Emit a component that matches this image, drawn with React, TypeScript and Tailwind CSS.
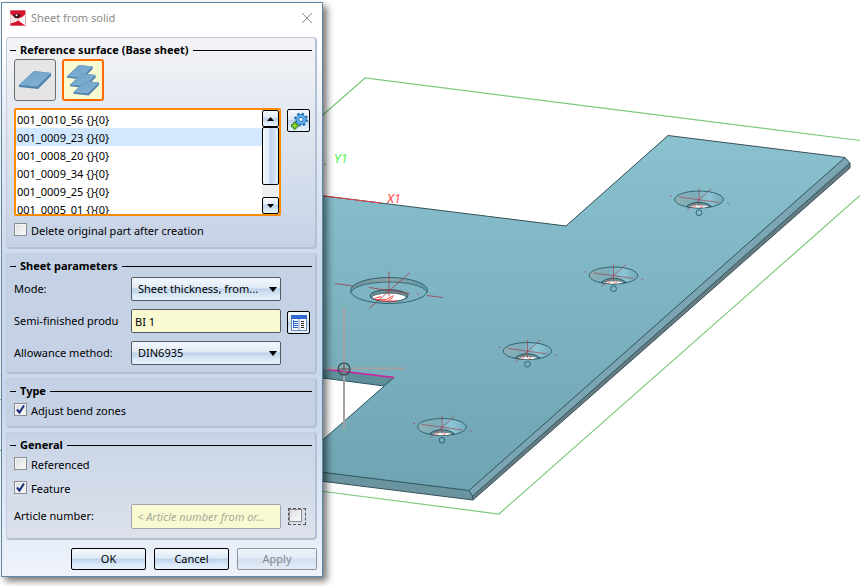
import React from "react";

const parts = [
  "001_0010_56 {}{0}",
  "001_0009_23 {}{0}",
  "001_0008_20 {}{0}",
  "001_0009_34 {}{0}",
  "001_0009_25 {}{0}",
  "001_0005_01 {}{0}",
];

const glossy =
  "bg-[linear-gradient(180deg,#f4f8fc_0%,#dfeaf6_45%,#bdd2ea_50%,#dbeaf8_80%,#e6f2fc_100%)]";

function CountersunkHole({ x, y }: { x: number; y: number }) {
  return (
    <g transform={`translate(${x} ${y})`} fill="none">
      <ellipse rx="24.3" ry="8.5" fill="url(#sink)" stroke="#2f6470" strokeWidth="1" />
      <path d="M-12.500 7Q-8 2.800 0 2.800Q8 2.800 12.500 7Q0 10-12.500 7Z" fill="#6c9097" stroke="#2b5059" strokeWidth="0.9" />
      <path d="M-10 7Q0 4.600 10 7Q0 9.400-10 7Z" fill="#fff" />
      <path d="M0-11V7M-20-2.6L20 3M12.5-11L-12 11M-29-3.6h2M28 3.6l2 .6" stroke="#a23a47" strokeOpacity="0.8" strokeWidth="0.8" />
      <path d="M-6 8L-3 6M1 8L4 6" stroke="#ff3c3c" strokeWidth="0.8" />
      <circle cy="13.2" r="2.9" stroke="#2f6470" strokeWidth="1" />
    </g>
  );
}

function Viewport() {
  return (
    <svg
      className="block h-screen w-full"
      viewBox="0 0 860 586"
      preserveAspectRatio="xMinYMin slice"
      role="img"
      aria-label="3D view of the sheet part"
    >
      <defs>
        <linearGradient id="face" x1="0" y1="0" x2="0" y2="1">
          <stop offset="0" stopColor="#8ac1cf" />
          <stop offset="1" stopColor="#6fa4b3" />
        </linearGradient>
        <linearGradient id="sink" x1="0" y1="0" x2="1" y2="0">
          <stop offset="0" stopColor="#8fb0b6" />
          <stop offset="0.4" stopColor="#79adba" />
          <stop offset="0.7" stopColor="#8cc6d6" />
          <stop offset="1" stopColor="#74aaba" />
        </linearGradient>
        <linearGradient id="rim" x1="0" y1="0" x2="1" y2="0">
          <stop offset="0" stopColor="#6b8d94" />
          <stop offset="0.5" stopColor="#8ba4aa" />
          <stop offset="1" stopColor="#5d9aa8" />
        </linearGradient>
      </defs>

      <g fill="none" stroke="#7cc97c" strokeWidth="1.2">
        <path d="M300 135L365 78L860 140.5" />
        <path d="M300 488.5L499 514L860 195.5" />
        <path d="M0 399.500h2M0 450.500h2M324 165l2-1" />
      </g>

      <path d="M300 193L566 226L668 135.500L845 157.500L850 163V168L473 500L300 478.500Z" fill="#667c82" />
      <path d="M300 469.500L469 490.500L472.500 496L473 500L300 478.500Z" fill="#6a949f" />
      <path d="M469 490.500L845 157.500L850 163L472.500 496Z" fill="#7ba5b3" />
      <path d="M300 193L566 226L668 135.500L845 157.500L469 490.500L300 469.500Z" fill="url(#face)" />
      <g fill="none" stroke="#2d5761" strokeWidth="1">
        <path d="M300 193L566 226L668 135.500L845 157.500L850 163V168L473 500L300 478.500" stroke="#3b555c" />
        <path d="M300 469.500L469 490.500L845 157.500" />
        <path d="M469 490.500L472.500 496L850 163M472.500 496L473 500" />
      </g>

      <path d="M300 366L394 377.500L384 386L300 375Z" fill="#5f8f9b" />
      <path d="M300 375L384 386L300 460Z" fill="#fff" />
      <path d="M300 375L384 386M394 377.500L300 460" stroke="#2d5761" fill="none" />
      <path d="M328 369.500L394 377.500" stroke="#d31c9c" strokeWidth="1.5" />

      <path d="M324 196L381 203" stroke="#e8404a" strokeWidth="1" />
      <text x="387" y="203" fill="#ff4a4a" className="font-['Roboto'] text-[12px] italic">X1</text>
      <text x="334" y="163" fill="#4cf04c" className="font-['Roboto'] text-[12px] italic">Y1</text>

      <g transform="translate(389 290.500)" fill="none">
        <path d="M-38.500 2C-40-18 40-18 38.500 2C33-12-33-12-38.500 2Z" fill="url(#rim)" />
        <ellipse rx="38.500" ry="13" stroke="#2f6470" />
        <path d="M-38.300 2C-32-12 32-12 38.300 2" stroke="#2f6470" strokeWidth="0.9" />
        <ellipse cy="5.200" rx="19" ry="6" fill="#6c9097" stroke="#2b5059" />
        <ellipse cy="6.800" rx="17" ry="4.200" fill="#fff" stroke="#2b5059" strokeWidth="0.8" />
        <path d="M-54-7L-36-4.500M38 5L54 7M0-19V6M21-18L-20 18M-20-3L21 3M28 3.500h2" stroke="#a23a47" strokeOpacity="0.85" strokeWidth="0.9" />
        <path d="M-15 8L-8 6M-13 9H-3L5 5M-1 10L4 7M-8 10.500H8" stroke="#ff3c3c" strokeWidth="0.9" />
      </g>

      <CountersunkHole x={699} y={199.500} />
      <CountersunkHole x={613.500} y={275.500} />
      <CountersunkHole x={527.500} y={351} />
      <CountersunkHole x={442} y={427} />

      <g fill="none">
        <path d="M344 308V429M324 368.500H405" stroke="#a2a2a2" strokeWidth="2" />
        <circle cx="344" cy="369" r="6" stroke="#37454a" strokeWidth="1.200" />
        <path d="M344 363V375M338 369H350" stroke="#4b5558" strokeWidth="1" />
      </g>
    </svg>
  );
}

function AppLogo() {
  return (
    <svg className="size-4" viewBox="0 0 16 16" aria-hidden="true">
      <rect x="0.500" y="0.500" width="15" height="15" fill="#fff" stroke="#dca8ae" />
      <path d="M0.500 0.500H15V5Q12 9 8 10.500Q4 9 0.500 4Z" fill="#d8102f" />
      <path d="M0.500 4Q4 7 8 8.500Q12 8 15 4.500V6Q11 10 6 11.500L0.500 14Z" fill="#f7e3e3" />
      <path d="M0.500 13.500Q5 12.500 8.500 10.500L15 15.500H0.500Z" fill="#d8102f" />
      <path d="M3 5.500Q6.500 2 11 5.500Q8 9 5 8Z" fill="#301818" />
      <circle cx="6.500" cy="5.200" r="1" fill="#fff" />
    </svg>
  );
}

function Slab({ x, y, s = 1 }: { x: number; y: number; s?: number }) {
  return (
    <g transform={`translate(${x} ${y}) scale(${s})`}>
      <path d="M0 14L15 0L32 2V5L19 18L0 16Z" fill="#4f83ad" />
      <path d="M0 14L15 0L32 2L18 15.500Z" fill="url(#slab)" />
    </g>
  );
}

function SlabDefs() {
  return (
    <defs>
      <linearGradient id="slab" x1="0" y1="0" x2="1" y2="1">
        <stop offset="0" stopColor="#6c9fc7" />
        <stop offset="1" stopColor="#86b4d6" />
      </linearGradient>
    </defs>
  );
}

function Group({ title, className, children }: { title: string; className: string; children: React.ReactNode }) {
  return (
    <section
      className={`rounded border-t border-r-2 border-b-2 border-l border-[#b4c1d5] border-t-[#c3cddc] border-l-[#c3cddc] pt-[3px] ${className}`}
    >
      <div className="flex h-[18px] items-center gap-1 px-[3px]">
        <span className="h-px w-[6px] bg-black" />
        <h2 className="leading-[18px] font-bold">{title}</h2>
        <span className="h-px flex-1 bg-black" />
      </div>
      <div className="pr-[5px] pl-[7px]">{children}</div>
    </section>
  );
}

function Check({ label, checked = false }: { label: string; checked?: boolean }) {
  return (
    <label className="flex h-[14px] items-start gap-1 leading-4">
      <span className="grid">
        <input
          type="checkbox"
          defaultChecked={checked}
          className="peer col-start-1 row-start-1 size-[13px] appearance-none border border-[#8a8c90] bg-[linear-gradient(135deg,#dcdde0,#fbfbfb)] shadow-[inset_0_0_0_1px_#f4f4f4]"
        />
        <svg className="pointer-events-none invisible col-start-1 row-start-1 size-[13px] peer-checked:visible" viewBox="0 0 13 13" aria-hidden="true">
          <path d="M3 6.500L5.500 9.500L10 2.500" fill="none" stroke="#16287a" strokeWidth="2" />
        </svg>
      </span>
      {label}
    </label>
  );
}

function Dropdown({ id, value }: { id: string; value: string }) {
  return (
    <span className="grid h-6 w-[150px] items-center">
      <select
        id={id}
        className={`col-start-1 row-start-1 h-6 w-full appearance-none rounded-[2px] border border-[#55585e] pr-4 pl-[6px] ${glossy}`}
      >
        <option>{value}</option>
      </select>
      <svg className="pointer-events-none col-start-1 row-start-1 mr-1 h-[5px] w-2 justify-self-end" viewBox="0 0 8 5" aria-hidden="true">
        <path d="M0 0H8L4 5Z" />
      </svg>
    </span>
  );
}

function ScrollButton({ label, up = false }: { label: string; up?: boolean }) {
  return (
    <button aria-label={label} className={`flex h-[17px] w-full items-center justify-center rounded-[2px] border border-black ${glossy}`}>
      <svg className="h-[4px] w-[7px]" viewBox="0 0 7 4" aria-hidden="true">
        <path d={up ? "M0 4H7L3.500 0Z" : "M0 0H7L3.500 4Z"} />
      </svg>
    </button>
  );
}

function ReferenceSurface() {
  return (
    <Group title="Reference surface (Base sheet)" className="bg-[linear-gradient(180deg,#f3f4f6,#e2e7f0_40%,#c5d2e6)]">
      <div className="flex gap-[6px]">
        <button aria-label="Single surface" className="flex size-[42px] items-center justify-center rounded-[3px] border border-[#6d6d6d] bg-[#e5e5e5]">
          <svg className="h-5 w-8" viewBox="0 0 32 20" aria-hidden="true">
            <SlabDefs />
            <Slab x={0} y={1} />
          </svg>
        </button>
        <button aria-label="Several surfaces" className="flex size-[42px] items-center justify-center rounded-[3px] border-2 border-[#ff6a00] bg-[#fafad2]">
          <svg className="h-8 w-8" viewBox="0 0 32 32" aria-hidden="true">
            <Slab x={0} y={1} s={0.8} />
            <Slab x={3} y={9.500} s={0.8} />
            <Slab x={6.500} y={17} s={0.8} />
          </svg>
        </button>
      </div>
      <div className="mt-[7px] flex items-start gap-[6px]">
        <div className="flex h-[108px] w-[267px] rounded-[2px] border-2 border-[#ff8c00] bg-white">
          <ul role="listbox" aria-label="Base surfaces" className="h-full flex-1 overflow-hidden">
            {parts.map((part, i) => (
              <li key={part} role="option" aria-selected={i === 1} className={`px-px pt-px leading-[17px] ${i === 1 ? "bg-[#d1e8ff]" : ""}`}>
                {part}
              </li>
            ))}
          </ul>
          <div className="flex w-[17px] flex-col bg-[#efefef]">
            <ScrollButton label="Scroll up" up />
            <div className="h-[58px] rounded-[2px] border border-black bg-[linear-gradient(90deg,#f4f8fc_0%,#dfeaf6_40%,#bdd2ea_50%,#e6f2fc_100%)]" />
            <div className="flex-1" />
            <ScrollButton label="Scroll down" />
          </div>
        </div>
        <button aria-label="Add by settings" className={`mt-px flex size-[23px] items-center justify-center rounded-[2px] border border-black ${glossy}`}>
          <svg className="size-[18px]" viewBox="0 0 18 18" aria-hidden="true">
            <circle cx="11" cy="7.500" r="5.800" fill="none" stroke="#1f6fb8" strokeWidth="2.200" strokeDasharray="2.300 2.250" />
            <circle cx="11" cy="7.500" r="4.900" fill="#6db7ea" stroke="#1f78c4" strokeWidth="1" />
            <circle cx="11" cy="7.500" r="2.200" fill="#e6f0f8" stroke="#1f6fb8" strokeWidth="1" />
            <path d="M3.500 10.500h2.500v2h2v2.500h-2v2h-2.500v-2h-2v-2.500h2z" fill="#8fdc2a" stroke="#2d7a16" strokeWidth="0.900" />
          </svg>
        </button>
      </div>
      <div className="mt-[7px] mb-[10px]">
        <Check label="Delete original part after creation" />
      </div>
    </Group>
  );
}

function SheetParameters() {
  return (
    <Group title="Sheet parameters" className="bg-[#c5d2e6]">
      <div className="mt-[2px] mb-[7px] grid grid-cols-[105px_150px_23px] items-center gap-y-2">
        <label htmlFor="mode">Mode:</label>
        <span className="col-span-2 ml-3"><Dropdown id="mode" value="Sheet thickness, from..." /></span>
        <label htmlFor="semi" className="overflow-hidden whitespace-nowrap">Semi-finished product:</label>
        <div className="col-span-2 ml-3 flex h-6 items-center gap-[6px]">
          <input id="semi" defaultValue="BI 1" className="h-6 w-[150px] rounded-[2px] border border-[#55585e] bg-[#fafad2] px-[3px]" />
          <button aria-label="Open catalogue" className={`mt-[3px] flex size-[23px] shrink-0 items-center justify-center rounded-[2px] border border-black ${glossy}`}>
            <svg className="size-4" viewBox="0 0 16 16" aria-hidden="true">
              <rect x="0.500" y="1" width="15" height="14.500" fill="#f5f8ff" stroke="#6f87b5" />
              <rect x="0" y="0" width="16" height="4" fill="#2f6ad0" />
              <path d="M8 4V15" stroke="#8a9ab8" />
              <path d="M2.500 5V13M2.500 6.500H7M2.500 8.500H7M2.500 10.500H7M2.500 12.500H7" stroke="#2f6ad0" fill="none" />
              <path d="M10 6.500H13M10 8.500H13M10 10.500H13M10 12.500H13" stroke="#222" />
            </svg>
          </button>
        </div>
        <label htmlFor="allowance" className="whitespace-nowrap">Allowance method:</label>
        <span className="col-span-2 ml-3"><Dropdown id="allowance" value="DIN6935" /></span>
      </div>
    </Group>
  );
}

function General() {
  return (
    <Group title="General" className="bg-[linear-gradient(180deg,#c8d4e6,#dde2ec)]">
      <div className="mt-[3px] mb-[9px] flex flex-col gap-[10px]">
        <Check label="Referenced" />
        <Check label="Feature" checked />
        <div className="-mt-px flex items-center">
          <label htmlFor="article" className="w-[117px]">Article number:</label>
          <input
            id="article"
            disabled
            placeholder="&lt; Article number from or..."
            className="h-[25px] w-[150px] rounded-[2px] border border-[#a3a5a8] bg-[#fafad2] px-[5px] italic placeholder:text-[#a9a99b]"
          />
          <span className="ml-[7px] flex h-[17px] w-[18px] items-start border border-dashed border-[#555]">
            <input
              type="checkbox"
              aria-label="Set article number"
              className="size-[13px] appearance-none border border-[#8a8c90] bg-[linear-gradient(135deg,#dcdde0,#fbfbfb)]"
            />
          </span>
        </div>
      </div>
    </Group>
  );
}

export default function App() {
  return (
    <main className="relative min-h-screen overflow-hidden bg-white font-['Noto_Sans','Open_Sans',sans-serif] text-[11px] text-black">
      <Viewport />
      <div
        role="dialog"
        aria-label="Sheet from solid"
        className="absolute top-[2px] left-px w-[322px] border border-[#5f87a8] bg-[linear-gradient(180deg,#ffffff_0%,#ffffff_6%,#e8edf5_20%,#cddaec_45%,#c9d8ed_70%,#e9eff9_95%,#edf2fb_100%)] pb-[6px] shadow-[4px_4px_7px_rgba(0,0,0,0.55)]"
      >
        <header className="flex h-[34px] items-center gap-[5px] pr-[9px] pb-1 pl-2">
          <AppLogo />
          <h1 className="flex-1 text-[#8b8b8b]">Sheet from solid</h1>
          <button aria-label="Close" className="size-3">
            <svg viewBox="0 0 12 12" aria-hidden="true">
              <path d="M1 1L11 11M11 1L1 11" stroke="#8b8b8b" fill="none" />
            </svg>
          </button>
        </header>
        <div className="flex flex-col gap-1 pr-[5px] pl-1">
          <ReferenceSurface />
          <SheetParameters />
          <Group title="Type" className="bg-[#c5d2e6]">
            <div className="mt-[3px] mb-[9px]">
              <Check label="Adjust bend zones" checked />
            </div>
          </Group>
          <General />
        </div>
        <footer className="mt-2 flex justify-end gap-2 pr-[5px]">
          <button className={`h-[22px] w-[75px] rounded-[2px] border border-black leading-5 ${glossy}`}>OK</button>
          <button className={`h-[22px] w-[75px] rounded-[2px] border border-black leading-5 ${glossy}`}>Cancel</button>
          <button disabled className="h-[22px] w-[80px] rounded-[2px] border border-[#8d949f] bg-[linear-gradient(180deg,#edf2f9_0%,#e4ebf6_45%,#d3dff0_50%,#e4edf9_100%)] leading-5 text-[#83878e]">
            Apply
          </button>
        </footer>
      </div>
    </main>
  );
}
